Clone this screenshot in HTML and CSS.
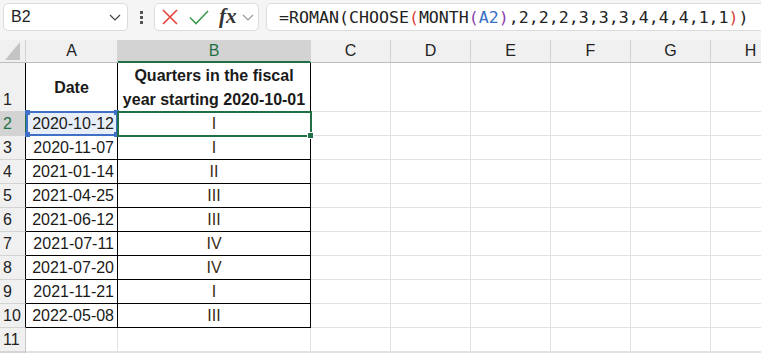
FILE: index.html
```html
<!DOCTYPE html>
<html>
<head>
<meta charset="utf-8">
<link rel="stylesheet" href="styles.css">
</head>
<body>
<div class="toolbar">
  <div class="namebox">
    <span class="name">B2</span>
    <svg class="chev" width="12" height="7" viewBox="0 0 12 7"><path d="M1 1 L6 6 L11 1" fill="none" stroke="#444" stroke-width="1.2"/></svg>
  </div>
  <div class="dots"><i></i><i></i><i></i></div>
  <div class="fxbox">
    <svg class="x" width="16" height="16" viewBox="0 0 16 16"><path d="M1 1 L15 15 M15 1 L1 15" stroke="#e5423d" stroke-width="1.6" fill="none"/></svg>
    <svg class="ok" width="20" height="15" viewBox="0 0 20 15"><path d="M1 7.5 L7 13.5 L19 1" stroke="#3f9b4f" stroke-width="1.6" fill="none"/></svg>
    <span class="fx">fx</span>
    <svg class="chev2" width="12" height="7" viewBox="0 0 12 7"><path d="M1 1 L6 6 L11 1" fill="none" stroke="#9a9a9a" stroke-width="1.2"/></svg>
  </div>
  <div class="formula">=ROMAN(CHOOSE<span class="pr">(</span>MONTH<span class="pu">(</span><span class="bl">A2</span><span class="pu">)</span>,2,2,2,3,3,3,4,4,4,1,1<span class="pr">)</span>)</div>
</div>

<div class="sheet">
  <div class="hd corner"><svg width="16" height="18" viewBox="0 0 16 18"><path d="M15 0 L15 18 L0 18 Z" fill="#c4c4c4"/></svg></div>
  <div class="hd col">A</div>
  <div class="hd col sel">B</div>
  <div class="hd col">C</div>
  <div class="hd col">D</div>
  <div class="hd col">E</div>
  <div class="hd col">F</div>
  <div class="hd col">G</div>
  <div class="hd col">H</div>

  <div class="rh r1 tb">1</div>
  <div class="c t th">Date</div>
  <div class="c t th">Quarters in the fiscal<br>year starting 2020-10-01</div>
  <div class="c"></div><div class="c"></div><div class="c"></div><div class="c"></div><div class="c"></div><div class="c"></div>

  <div class="rh rsel">2</div>
  <div class="c t d ref">2020-10-12</div>
  <div class="c t q">I</div>
  <div class="c"></div><div class="c"></div><div class="c"></div><div class="c"></div><div class="c"></div><div class="c"></div>

  <div class="rh tb">3</div>
  <div class="c t d">2020-11-07</div>
  <div class="c t q">I</div>
  <div class="c"></div><div class="c"></div><div class="c"></div><div class="c"></div><div class="c"></div><div class="c"></div>

  <div class="rh tb">4</div>
  <div class="c t d">2021-01-14</div>
  <div class="c t q">II</div>
  <div class="c"></div><div class="c"></div><div class="c"></div><div class="c"></div><div class="c"></div><div class="c"></div>

  <div class="rh tb">5</div>
  <div class="c t d">2021-04-25</div>
  <div class="c t q">III</div>
  <div class="c"></div><div class="c"></div><div class="c"></div><div class="c"></div><div class="c"></div><div class="c"></div>

  <div class="rh tb">6</div>
  <div class="c t d">2021-06-12</div>
  <div class="c t q">III</div>
  <div class="c"></div><div class="c"></div><div class="c"></div><div class="c"></div><div class="c"></div><div class="c"></div>

  <div class="rh tb">7</div>
  <div class="c t d">2021-07-11</div>
  <div class="c t q">IV</div>
  <div class="c"></div><div class="c"></div><div class="c"></div><div class="c"></div><div class="c"></div><div class="c"></div>

  <div class="rh tb">8</div>
  <div class="c t d">2021-07-20</div>
  <div class="c t q">IV</div>
  <div class="c"></div><div class="c"></div><div class="c"></div><div class="c"></div><div class="c"></div><div class="c"></div>

  <div class="rh tb">9</div>
  <div class="c t d">2021-11-21</div>
  <div class="c t q">I</div>
  <div class="c"></div><div class="c"></div><div class="c"></div><div class="c"></div><div class="c"></div><div class="c"></div>

  <div class="rh tb">10</div>
  <div class="c t d">2022-05-08</div>
  <div class="c t q">III</div>
  <div class="c"></div><div class="c"></div><div class="c"></div><div class="c"></div><div class="c"></div><div class="c"></div>

  <div class="rh">11</div>
  <div class="c"></div><div class="c"></div>
  <div class="c"></div><div class="c"></div><div class="c"></div><div class="c"></div><div class="c"></div><div class="c"></div>

  <div class="rh"></div>
  <div class="c"></div><div class="c"></div>
  <div class="c"></div><div class="c"></div><div class="c"></div><div class="c"></div><div class="c"></div><div class="c"></div>

  <div class="refbox">
    <i class="sq tl"></i><i class="sq tr"></i><i class="sq bl2"></i><i class="sq br"></i>
  </div>
  <div class="selbox"></div>
  <div class="handle"></div>
</div>
</body>
</html>
```

FILE: styles.css
```css
* { box-sizing: border-box; }
html, body { margin: 0; padding: 0; }
body {
  width: 761px;
  height: 356px;
  overflow: hidden;
  background: #ffffff;
  font-family: "Liberation Sans", Arial, sans-serif;
  color: #1a1a1a;
}

/* ---------- formula bar ---------- */
.toolbar {
  display: flex;
  align-items: flex-start;
  height: 40px;
  padding: 3px 0 0 3px;
  background: #f5f5f5;
}
.namebox {
  width: 125px;
  height: 28px;
  background: #fff;
  border: 1px solid #dcdcdc;
  border-radius: 5px;
  display: flex;
  align-items: center;
  justify-content: space-between;
  padding: 0 6px 0 7px;
}
.name { font-size: 16px; color: #222; }
.dots {
  display: flex;
  flex-direction: column;
  gap: 2px;
  margin: 8px 11px 0 12px;
}
.dots i {
  display: block;
  width: 3px;
  height: 3px;
  background: #555;
}
.fxbox {
  width: 105px;
  height: 28px;
  background: #fff;
  border: 1px solid #dcdcdc;
  border-radius: 5px;
  display: flex;
  align-items: center;
  padding-left: 7px;
}
.fxbox .x { margin-right: 11px; }
.fxbox .ok { margin-right: 10px; margin-top: 1px; }
.fx {
  font-family: "Liberation Serif", "DejaVu Serif", serif;
  font-style: italic;
  font-weight: bold;
  font-size: 21px;
  color: #333;
  margin-right: 5px;
  margin-top: -2px;
}
.formula {
  flex: 1;
  height: 28px;
  margin-left: 7px;
  margin-right: -20px;
  background: #fff;
  border: 1px solid #dcdcdc;
  border-radius: 5px;
  padding: 2px 0 0 12px;
  font-family: "DejaVu Sans Mono", "Liberation Mono", monospace;
  font-size: 16.6px;
  line-height: 24px;
  color: #222;
  white-space: nowrap;
}
.pr { color: #d9443f; }
.pu { color: #8a3fb0; }
.bl { color: #3a6fc4; }

/* ---------- sheet ---------- */
.sheet {
  position: relative;
  display: grid;
  grid-template-columns: 26px 92px 193px 80px 80px 80px 80px 80px 80px;
  grid-template-rows: 23px 49px repeat(10, 24px);
  font-size: 16px;
}
.hd {
  background: #f0f0f0;
  border-right: 1px solid #d4d4d4;
  border-bottom: 1px solid #bdbdbd;
  color: #222;
  display: flex;
  align-items: center;
  justify-content: center;
  line-height: 22px;
}
.corner { justify-content: flex-end; align-items: flex-end; padding: 0 4px 2px 0; }
.corner svg { display: block; }
.hd.sel {
  background: #d3d3d3;
  color: #1f7145;
  border-bottom: 2px solid #1f7145;
}
.rh {
  background: #f0f0f0;
  border-right: 1px solid #c8c8c8;
  border-bottom: 1px solid #d4d4d4;
  color: #222;
  display: flex;
  align-items: flex-end;
  padding-left: 3px;
  line-height: 23px;
}
.rh.tb { border-right-color: #000; }
.rh.rsel {
  background: #d3d3d3;
  color: #1f7145;
  border-right: 1px solid #1f7145;
}
.c {
  border-right: 1px solid #e1e1e1;
  border-bottom: 1px solid #e1e1e1;
  line-height: 23px;
  white-space: nowrap;
}
.c.t {
  border-right-color: #000;
  border-bottom-color: #000;
}
.th {
  font-weight: bold;
  display: flex;
  align-items: center;
  justify-content: center;
  text-align: center;
  line-height: 24px;
  padding-top: 1px;
}
.d { text-align: right; padding-right: 3px; }
.q { text-align: center; color: #3b2c14; }
.ref { background: #e8eef8; }

/* ---------- selection overlays ---------- */
.refbox {
  position: absolute;
  left: 26px;
  top: 71px;
  width: 92px;
  height: 25px;
  border: 2px solid #3f6fc6;
}
.sq {
  position: absolute;
  width: 5px;
  height: 5px;
  background: #3f6fc6;
}
.sq.tl { left: -3px; top: -3px; }
.sq.tr { right: -3px; top: -3px; }
.sq.bl2 { left: -3px; bottom: -3px; }
.sq.br { right: -3px; bottom: -3px; }
.selbox {
  position: absolute;
  left: 117px;
  top: 71px;
  width: 195px;
  height: 26px;
  border: 2px solid #1f7145;
}
.handle {
  position: absolute;
  left: 307px;
  top: 92px;
  width: 7px;
  height: 7px;
  background: #1f7145;
  border: 1px solid #fff;
}
```
